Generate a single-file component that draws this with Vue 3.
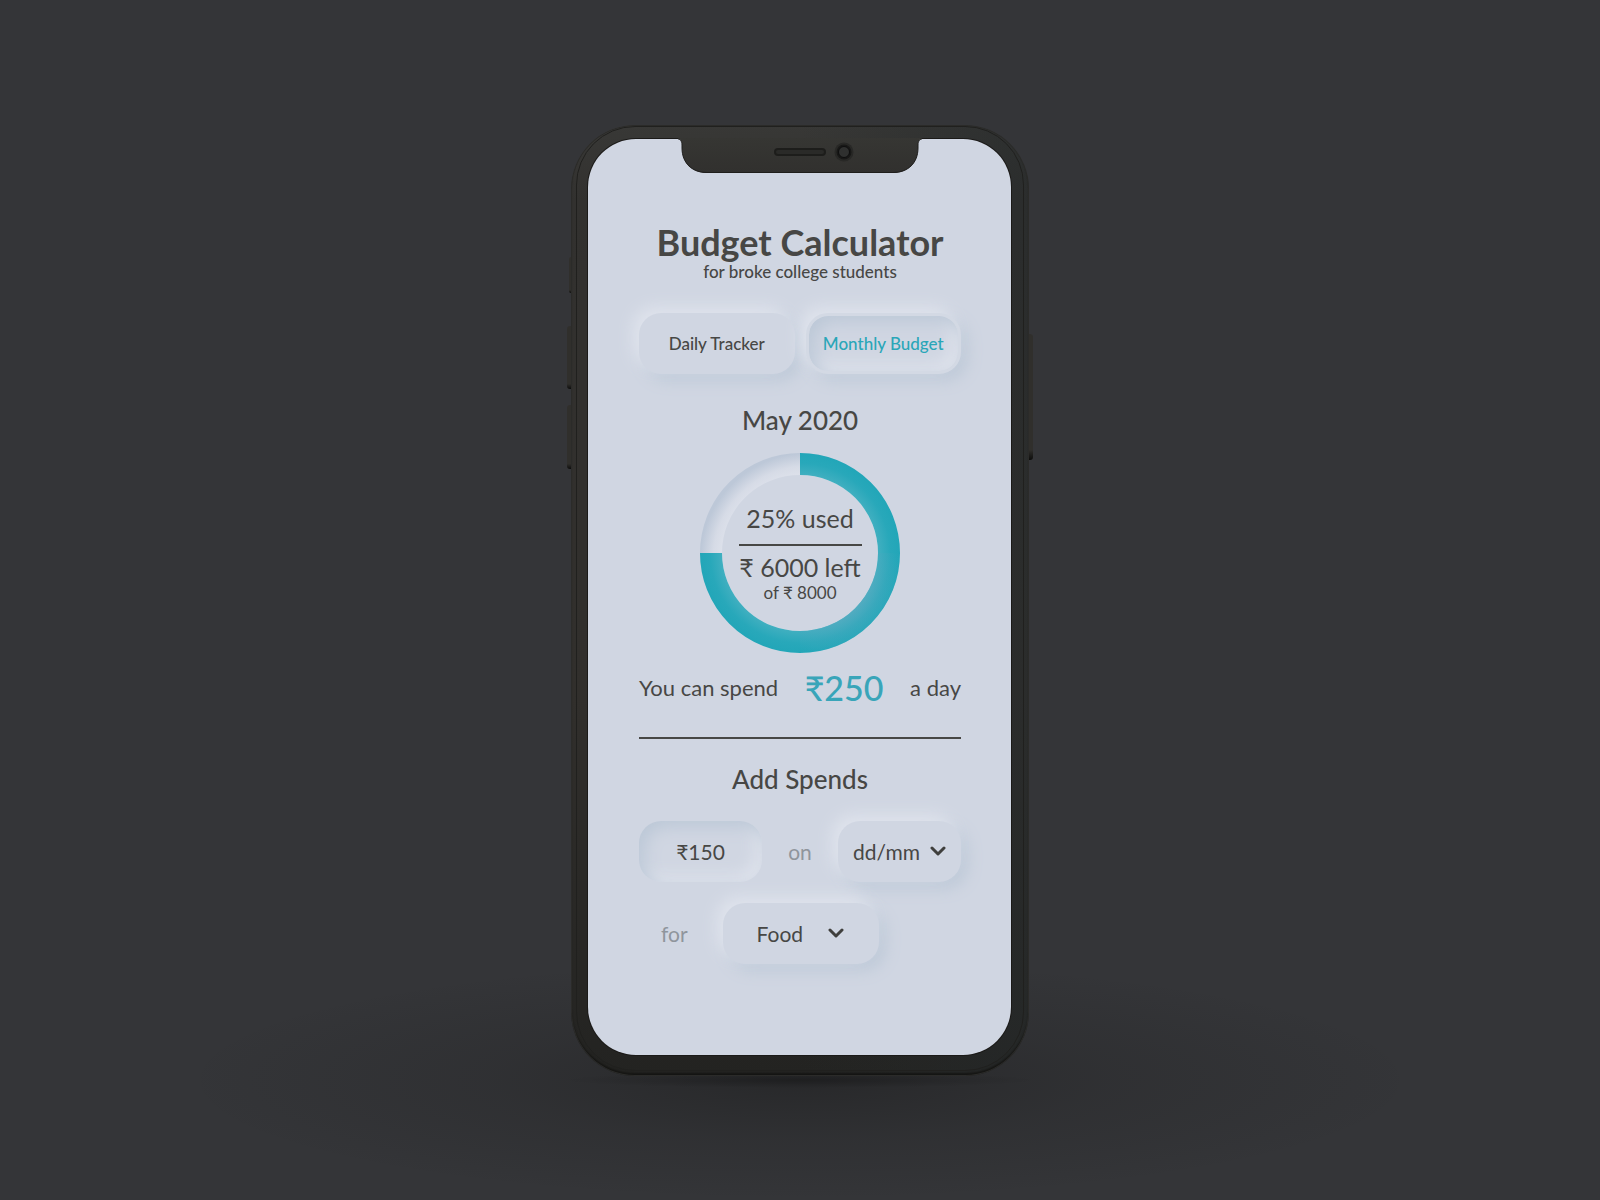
<script setup>
import { ref, computed } from 'vue';

const tabs = ['Daily Tracker', 'Monthly Budget'];
const activeTab = ref('Monthly Budget');

const budget = ref(8000);
const left = ref(6000);
const perDay = ref(250);

const amount = ref('₹150');
const date = ref('dd/mm');
const category = ref('Food');

const dates = ['dd/mm', '01/05', '02/05', '03/05'];
const categories = ['Food', 'Travel', 'Books', 'Rent'];

const leftShare = computed(() => left.value / budget.value);
const usedPercent = computed(() => Math.round((1 - leftShare.value) * 100));
</script>

<template>
  <main class="stage">
    <div class="phone">
      <span class="side-key key-mute"></span>
      <span class="side-key key-up"></span>
      <span class="side-key key-down"></span>
      <span class="side-key key-power"></span>

      <div class="screen">
        <svg class="notch" viewBox="0 -1 248 35" aria-hidden="true">
          <defs>
            <linearGradient id="notchFill" x1="0" y1="0" x2="0" y2="1">
              <stop offset="0" stop-color="#363633" />
              <stop offset="1" stop-color="#31302e" />
            </linearGradient>
          </defs>
          <path
            d="M2 -1 H246 V0 C244 0 242 2 242 6 V9 C242 24 232 34 217 34 H31 C16 34 6 24 6 9 V6 C6 2 4 0 2 0 Z"
            fill="url(#notchFill)"
          />
          <path
            d="M2 0 C4 0 6 2 6 6 V9 C6 24 16 33.500 31 33.500 H217 C232 33.500 242 24 242 9 V6 C242 2 244 0 246 0"
            fill="none"
            stroke="#1f1e1c"
          />
          <rect x="98" y="9" width="52" height="8" rx="4" fill="#1d1d1b" />
          <rect x="100" y="11" width="48" height="4" rx="2" fill="#2a2a28" />
          <circle cx="168" cy="13" r="9.500" fill="#282826" />
          <circle cx="168" cy="13" r="7.500" fill="#181817" />
          <circle cx="168" cy="13" r="5.500" fill="#2f302f" stroke="#0e0e0e" />
        </svg>

        <div class="content">
          <h1 class="title">Budget Calculator</h1>
          <p class="subtitle">for broke college students</p>

          <div class="tabs">
            <button
              v-for="tab in tabs"
              :key="tab"
              type="button"
              class="tab"
              :class="{ 'tab-active': tab === activeTab }"
              @click="activeTab = tab"
            >
              {{ tab }}
            </button>
          </div>

          <h2 class="heading month">May 2020</h2>

          <div class="ring-wrapper">
            <svg class="ring" viewBox="0 0 200 200" aria-hidden="true">
              <defs>
                <radialGradient id="ringBase" cx="108" cy="108" r="108" gradientUnits="userSpaceOnUse">
                  <stop offset="0.76" stop-color="#dfe3ec" />
                  <stop offset="0.88" stop-color="#d6dbe6" />
                  <stop offset="1" stop-color="#bdc8d8" />
                </radialGradient>
                <radialGradient id="ringLight" cx="126" cy="126" r="80" gradientUnits="userSpaceOnUse">
                  <stop offset="0.45" stop-color="#64aac2" stop-opacity="0.7" />
                  <stop offset="0.85" stop-color="#3ba8bc" stop-opacity="0.3" />
                  <stop offset="1" stop-color="#23a7b9" stop-opacity="0" />
                </radialGradient>
                <radialGradient id="ringInner" cx="100" cy="100" r="100" gradientUnits="userSpaceOnUse">
                  <stop offset="0.78" stop-color="#40afc0" />
                  <stop offset="0.9" stop-color="#28a8ba" />
                  <stop offset="1" stop-color="#22a6b8" />
                </radialGradient>
              </defs>
              <circle cx="100" cy="100" r="89" fill="none" stroke="url(#ringBase)" stroke-width="22" />
              <g fill="none" stroke-width="22" transform="rotate(-90 100 100)">
                <circle
                  cx="100"
                  cy="100"
                  r="89"
                  stroke="url(#ringInner)"
                  pathLength="100"
                  :stroke-dasharray="`${leftShare * 100} 100`"
                />
              </g>
              <path d="M189 100 A89 89 0 0 1 100 189" fill="none" stroke="url(#ringLight)" stroke-width="22" />
            </svg>
            <div class="ring-text">
              <span class="ring-figure">{{ usedPercent }}% used</span>
              <hr class="ring-rule" />
              <span class="ring-figure">₹ {{ left }} left</span>
              <span class="ring-total">of ₹ {{ budget }}</span>
            </div>
          </div>

          <p class="per-day">
            <span>You can spend</span>
            <strong class="per-day-amount">₹{{ perDay }}</strong>
            <span>a day</span>
          </p>

          <hr class="rule" />

          <h2 class="heading add-heading">Add Spends</h2>

          <form class="spend-form" @submit.prevent>
            <div class="form-row">
              <input id="amount" v-model="amount" class="amount" type="text" aria-label="Amount" />
              <label class="joiner" for="date">on</label>
              <div class="picker">
                <select id="date" v-model="date" class="picker-select date-select">
                  <option v-for="d in dates" :key="d">{{ d }}</option>
                </select>
                <svg class="chevron date-chevron" viewBox="0 0 16 10" aria-hidden="true">
                  <path d="M2 2 L8 8 L14 2" />
                </svg>
              </div>
            </div>
            <div class="form-row category-row">
              <label class="joiner" for="category">for</label>
              <div class="picker picker-wide">
                <select id="category" v-model="category" class="picker-select category-select">
                  <option v-for="c in categories" :key="c">{{ c }}</option>
                </select>
                <svg class="chevron category-chevron" viewBox="0 0 16 10" aria-hidden="true">
                  <path d="M2 2 L8 8 L14 2" />
                </svg>
              </div>
            </div>
          </form>
        </div>
      </div>
    </div>
  </main>
</template>

<style>
body {
  margin: 0;
  background: #343538;
}
</style>

<style scoped>
.stage {
  --surface: #d0d6e2;
  --light: #e0e4ed;
  --dark: #bcc8d7;
  --ink: #474745;
  --teal: #2aa6b8;

  box-sizing: border-box;
  min-height: 100vh;
  padding: 24px 0;
  display: flex;
  align-items: center;
  justify-content: center;
  /* soft shadow on the floor, darkest right under the phone */
  background:
    radial-gradient(ellipse 240px 8px at 50% 90%, rgba(0, 0, 0, 0.25), transparent),
    radial-gradient(ellipse 620px 120px at 50% 90%, rgba(20, 20, 20, 0.38), rgba(20, 20, 20, 0.14) 50%, transparent),
    #343538;
  font-family: Lato, "Noto Sans", sans-serif;
  color: var(--ink);
}

/* Phone body */
.phone {
  position: relative;
  box-sizing: border-box;
  width: 100%;
  max-width: 458px;
  padding: 14px 18px 21px 17px;
  border-radius: 64px;
  background:
    linear-gradient(to right, transparent 50%, rgba(38, 42, 43, 0.6)),
    linear-gradient(to bottom, #383836 0, #32312f 8%, #312f2c 60%, #232321 100%);
  box-shadow:
    inset 0 0 0 1px #2b2b29,
    inset 0 -3px 2px #151513;
}

.phone::before {
  content: "";
  position: absolute;
  inset: 1px 5px 5px;
  border: 1px solid #20201e;
  border-radius: 59px;
}

.side-key {
  position: absolute;
  left: -4px;
  width: 4px;
  border-radius: 3px 0 0 3px;
  background: linear-gradient(to bottom, #302f2c 0, #302f2c 92%, #0c0c0b 100%);
}

.key-mute {
  top: 132px;
  left: -2px;
  width: 2px;
  height: 36px;
}

.key-up {
  top: 201px;
  height: 63px;
}

.key-down {
  top: 280px;
  height: 64px;
}

.key-power {
  top: 209px;
  left: auto;
  right: -4px;
  height: 126px;
  border-radius: 0 3px 3px 0;
}

.screen {
  position: relative;
  display: flow-root;
  border-radius: 48px;
  background: var(--surface);
  box-shadow: 0 0 0 1px #1b1a18;
}

.notch {
  display: block;
  width: 248px;
  height: 35px;
  margin: -1px auto 0;
}

.content {
  padding: 49px 50px 91px 51px;
}

/* Headings */
.title {
  margin: 0;
  font-size: 36px;
  line-height: 40px;
  font-weight: 700;
  text-align: center;
}

.subtitle {
  margin: 0;
  font-size: 17px;
  line-height: 20px;
  font-weight: 500;
  text-align: center;
}

.heading {
  margin: 0;
  font-size: 26px;
  line-height: 32px;
  font-weight: 500;
  text-align: center;
}

.month {
  margin-top: 30px;
}

.add-heading {
  margin-top: 24px;
}

/* Tabs */
.tabs {
  display: grid;
  grid-template-columns: 1fr 1fr;
  gap: 11px;
  margin-top: 31px;
}

.tab {
  height: 61px;
  padding: 0;
  border: 0;
  border-radius: 22px;
  background: var(--surface);
  box-shadow:
    -6px -6px 16px var(--light),
    6px 6px 16px var(--dark);
  color: var(--ink);
  font-family: inherit;
  font-size: 17px;
  font-weight: 500;
  cursor: pointer;
}

.tab-active {
  border: 3px solid #d3d9e4;
  box-shadow:
    -6px -6px 16px var(--light),
    6px 6px 16px var(--dark),
    inset 6px 6px 16px var(--dark),
    inset -6px -6px 16px var(--light);
  color: var(--teal);
}

/* Ring */
.ring-wrapper {
  display: grid;
  place-items: center;
  margin-top: 17px;
}

.ring,
.ring-text {
  grid-area: 1 / 1;
}

.ring {
  display: block;
  width: 200px;
  height: 200px;
}

.ring-text {
  display: flex;
  flex-direction: column;
  align-items: center;
}

.ring-figure {
  font-size: 25px;
  line-height: 32px;
}

.ring-rule {
  width: 123px;
  height: 2px;
  margin: 10px 0 5px;
  border: 0;
  background: var(--ink);
}

.ring-total {
  font-size: 17px;
  line-height: 20px;
}

/* Daily allowance */
.per-day {
  display: flex;
  align-items: center;
  justify-content: space-between;
  margin: 15px 0 29px;
  font-size: 22px;
  line-height: 40px;
}

.per-day-amount {
  color: #39a5b9;
  font-size: 34px;
  font-weight: 500;
}

.rule {
  height: 2px;
  margin: 0;
  border: 0;
  background: var(--ink);
}

/* Spend form */
.spend-form {
  display: flex;
  flex-direction: column;
  gap: 21px;
  margin-top: 26px;
  font-size: 21px;
}

.form-row {
  display: flex;
  align-items: center;
  justify-content: space-between;
}

.category-row {
  justify-content: flex-start;
  gap: 35px;
  padding-left: 22px;
}

.joiner {
  color: #8f959c;
}

.amount {
  box-sizing: border-box;
  width: 123px;
  height: 61px;
  padding: 0;
  border: 0;
  border-radius: 22px;
  background: var(--surface);
  box-shadow:
    inset 6px 6px 16px var(--dark),
    inset -6px -6px 16px var(--light);
  color: var(--ink);
  font: inherit;
  text-align: center;
}

.picker {
  display: grid;
  align-items: center;
  width: 123px;
  height: 61px;
  border-radius: 22px;
  background: var(--surface);
  box-shadow:
    -6px -6px 16px var(--light),
    6px 6px 16px var(--dark);
}

.picker-wide {
  width: 156px;
}

.picker-select {
  grid-area: 1 / 1;
  width: 100%;
  height: 100%;
  border: 0;
  border-radius: 22px;
  background: transparent;
  appearance: none;
  color: var(--ink);
  font: inherit;
  cursor: pointer;
}

.date-select {
  padding: 0 32px 0 15px;
}

.category-select {
  padding: 0 52px 0 34px;
}

.chevron {
  grid-area: 1 / 1;
  justify-self: end;
  width: 16px;
  height: 10px;
  fill: none;
  stroke: #3f3f3d;
  stroke-width: 3;
  stroke-linecap: round;
  stroke-linejoin: round;
  pointer-events: none;
}

.date-chevron {
  margin-right: 15px;
}

.category-chevron {
  margin-right: 35px;
}
</style>
